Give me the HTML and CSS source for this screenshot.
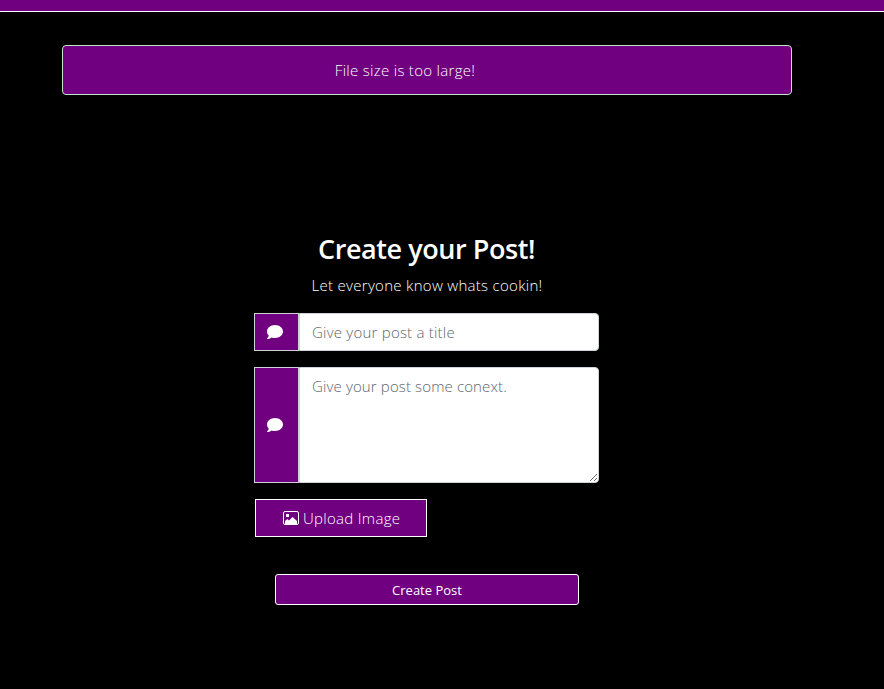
FILE: index.html
```html
<!DOCTYPE html>
<html lang="en">
<head>
<meta charset="utf-8">
<title>Create Post</title>
<link rel="stylesheet" href="styles.css">
</head>
<body>
<nav class="navbar"></nav>
<main class="container">
  <div class="alert" role="alert"><span class="alert-text">File size is too large!</span></div>
  <form class="post-form">
    <h3 class="title"><span>Create your Post!</span></h3>
    <p class="subtitle"><span>Let everyone know whats cookin!</span></p>
    <div class="input-group">
      <span class="prepend"><svg class="comment" viewBox="0 0 512 512"><path d="M256 32C114.6 32 0 125.1 0 240c0 49.6 21.4 95 57 130.7C44.5 421.1 2.7 466 2.2 466.5c-2.2 2.3-2.8 5.7-1.5 8.7S4.8 480 8 480c66.3 0 116-31.8 140.6-51.4 32.7 12.3 69 19.4 107.4 19.4 141.4 0 256-93.1 256-208S397.4 32 256 32z"/></svg></span>
      <input class="control title-input" type="text" placeholder="Give your post a title">
    </div>
    <div class="input-group tall">
      <span class="prepend"><svg class="comment" viewBox="0 0 512 512"><path d="M256 32C114.6 32 0 125.1 0 240c0 49.6 21.4 95 57 130.7C44.5 421.1 2.7 466 2.2 466.5c-2.2 2.3-2.8 5.7-1.5 8.7S4.8 480 8 480c66.3 0 116-31.8 140.6-51.4 32.7 12.3 69 19.4 107.4 19.4 141.4 0 256-93.1 256-208S397.4 32 256 32z"/></svg></span>
      <textarea class="control context-input" placeholder="Give your post some conext."></textarea>
    </div>
    <label class="upload">
      <svg class="image" viewBox="0 0 16 14"><rect x=".5" y=".5" width="15" height="13" rx="1.5" fill="none" stroke="#fff"/><path d="M3 3h3v3H3zM2 13v-3l2.5-2L6 9.5 9.5 6 14 10v3z" fill="#fff"/></svg>
      <span class="upload-text">Upload Image</span>
    </label>
    <button class="submit" type="button">Create Post</button>
  </form>
</main>
</body>
</html>
```
FILE: styles.css
```css
* { box-sizing: border-box; }
body {
  margin: 0;
  min-height: 689px;
  background: #000;
  color: #fff;
  font: 300 15px/24px "Open Sans", "Noto Sans", sans-serif;
}
.navbar { height: 12px; background: #70007f; border-bottom: 1px solid #fff; }
.container { width: 730px; margin: 33px 0 0 62px; }
.alert {
  height: 50px;
  padding: 12px 64px 12px 20px;
  border: 1px solid #c3e6cb;
  border-radius: 4px;
  background: #70007f;
  text-align: center;
  letter-spacing: .3px;
}
.post-form { width: 345px; margin: 137px 0 0 192px; display: flex; flex-direction: column; }
.title {
  margin: 0 0 7px;
  font-size: 27px;
  line-height: 34px;
  font-weight: 600;
  text-align: center;
  white-space: nowrap;
  letter-spacing: -.43px;
}
.subtitle { margin: 0 0 16px; padding-left: 1px; line-height: 24px; text-align: center; letter-spacing: .3px; white-space: nowrap; }
.input-group { display: flex; height: 38px; margin-bottom: 16px; }
.tall { height: 116px; }
.prepend {
  display: flex;
  align-items: center;
  width: 45px;
  padding-left: 12px;
  border: 1px solid #ced4da;
  background: #70007f;
}
.comment { width: 16px; height: 16px; fill: #fff; }
.control {
  flex: 1;
  min-width: 0;
  height: 100%;
  margin: 0;
  padding: 6px 12px;
  border: 1px solid #ced4da;
  border-radius: 0 4px 4px 0;
  background: #fff;
  color: #495057;
  font: inherit;
  letter-spacing: .22px;
  resize: none;
}
.control::placeholder { color: #5c656d; opacity: 1; }
.context-input { resize: vertical; letter-spacing: .13px; }
.upload {
  display: flex;
  align-items: center;
  width: 172px;
  height: 38px;
  margin-left: 1px;
  padding-left: 27px;
  border: 1px solid #fff;
  background: #70007f;
  white-space: nowrap;
  letter-spacing: .3px;
}
.image { width: 16px; height: 14px; margin-right: 4px; }
.submit {
  width: 304px;
  height: 31px;
  margin: 37px 0 0 21px;
  padding: 2px 0 0;
  border: 1px solid #fff;
  border-radius: 3px;
  background: #70007f;
  color: #fff;
  font: 400 13px/21px "Open Sans", "Noto Sans", sans-serif;
}
```
